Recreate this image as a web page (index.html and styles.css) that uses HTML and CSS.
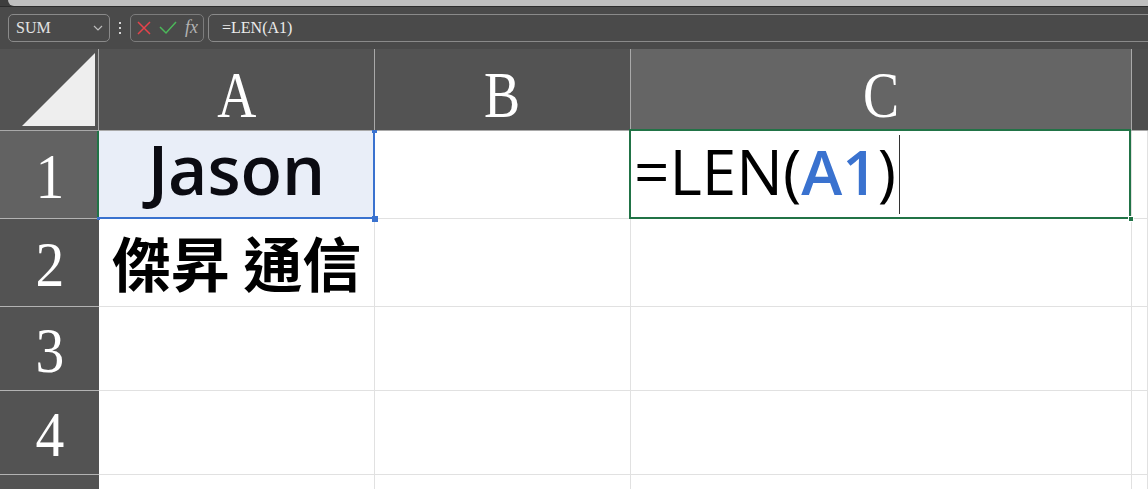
FILE: index.html
```html
<!DOCTYPE html>
<html lang="zh-Hant">
<head>
<meta charset="utf-8">
<title>LEN</title>
<link rel="stylesheet" href="styles.css">
</head>
<body>
<div class="app">
  <div class="top">
    <div class="strip"><div class="strip-in"></div></div>
    <div class="fbar">
      <div class="namebox">
        <span class="nb-text">SUM</span>
        <svg class="chev" width="10" height="6" viewBox="0 0 10 6"><polyline points="1,1 5,5 9,1" fill="none" stroke="#bdbdbd" stroke-width="1.2"/></svg>
      </div>
      <div class="dots"><i></i><i></i><i></i></div>
      <div class="btns">
        <svg class="ico" width="16" height="16" viewBox="0 0 16 16"><path d="M2 2 L14 14 M14 2 L2 14" stroke="#e5434b" stroke-width="1.5" fill="none"/></svg>
        <svg class="ico chk" width="18" height="14" viewBox="0 0 18 14"><polyline points="1,6 7,12 17,1" stroke="#4cb85a" stroke-width="1.5" fill="none"/></svg>
        <span class="fx">fx</span>
      </div>
      <div class="finput">=LEN(A1)</div>
    </div>
  </div>

  <div class="sheet">
    <div class="ch corner"><svg width="98" height="81" viewBox="0 0 98 81"><polygon points="22,77 95,77 95,4" fill="#eeeeee"/></svg></div>
    <div class="ch"><span class="hl">A</span></div>
    <div class="ch"><span class="hl">B</span></div>
    <div class="ch sel"><span class="hl">C</span></div>
    <div class="ch stub"></div>

    <div class="rh sel"><span class="hn">1</span></div>
    <div class="c ref"><span class="jason">Jason</span><i class="h h-tr"></i><i class="h h-br"></i><i class="h h-bl"></i></div>
    <div class="c"></div>
    <div class="c active"><span class="formula">=LEN(<b class="ref-b">A1</b>)</span><span class="caret"></span><i class="gh"></i></div>
    <div class="c"></div>

    <div class="rh"><span class="hn">2</span></div>
    <div class="c"><span class="cjk">傑昇 通信</span></div>
    <div class="c"></div>
    <div class="c"></div>
    <div class="c"></div>

    <div class="rh"><span class="hn">3</span></div>
    <div class="c"></div>
    <div class="c"></div>
    <div class="c"></div>
    <div class="c"></div>

    <div class="rh"><span class="hn">4</span></div>
    <div class="c"></div>
    <div class="c"></div>
    <div class="c"></div>
    <div class="c"></div>

    <div class="rh last"></div>
    <div class="c last"></div>
    <div class="c last"></div>
    <div class="c last"></div>
    <div class="c last"></div>
  </div>
</div>
</body>
</html>
```

FILE: styles.css
```css
* { box-sizing: border-box; }
html, body { margin: 0; padding: 0; }
body {
  width: 1148px;
  height: 489px;
  overflow: hidden;
  background: #4a4a4a;
  font-family: "Liberation Serif", serif;
}
.app { display: flex; flex-direction: column; height: 489px; }

/* top bar */
.top { height: 49px; background: #4a4a4a; display: flex; flex-direction: column; }
.strip { height: 7px; padding-left: 8px; background: #3e3e3e; border-bottom: 1px solid #2c2c2c; }
.strip-in { height: 6px; background: #bfbfbf; border-bottom-left-radius: 6px; }
.fbar { display: flex; align-items: stretch; height: 28px; margin-top: 7px; padding-left: 8px; margin-right: -12px; }
.namebox {
  width: 102px;
  border: 1px solid #8a8a8a;
  border-radius: 5px;
  display: flex; align-items: center; justify-content: space-between;
  padding: 0 6px 0 7px;
}
.nb-text { font-size: 16px; color: #e2e2e2; font-family: "Liberation Serif", serif; }
.chev { display: block; }
.dots { width: 20px; display: flex; flex-direction: column; align-items: center; justify-content: center; gap: 3px; }
.dots i { display: block; width: 2px; height: 2px; background: #d6d6d6; }
.btns {
  width: 74px;
  border: 1px solid #7c7c7c;
  border-radius: 5px;
  display: flex; align-items: center;
  padding-left: 5px; gap: 4px;
}
.ico { display: block; }
.ico.chk { margin-left: 3px; }
.fx { font-style: italic; font-size: 18px; color: #b3b3b3; font-family: "Liberation Serif", serif; margin-left: 4px; margin-top: -2px; }
.finput {
  flex: 1;
  margin-left: 4px;
  border: 1px solid #8a8a8a;
  border-radius: 5px;
  font-size: 16px; color: #ececec;
  display: flex; align-items: center;
  padding-left: 13px;
}

/* sheet */
.sheet {
  flex: 1;
  display: grid;
  grid-template-columns: 99px 276px 256px 501px 1fr;
  grid-template-rows: 82px 88px 88px 84px 84px 1fr;
  background: #fff;
}
.ch {
  background: #535353;
  border-right: 1px solid #a9a9a9;
  border-bottom: 1px solid #a9a9a9;
  display: flex; align-items: center; justify-content: center;
  padding-top: 11px;
  color: #fff;
}
.ch.corner { padding: 0; align-items: flex-start; justify-content: flex-start; }
.ch.corner svg { display: block; }
.ch.sel { background: #656565; }
.ch.stub { background: #4d4d4d; border-right: none; }
.hl { display: inline-block; font-size: 66px; line-height: 1; transform: scaleX(0.82); font-family: "Liberation Serif", serif; }

.rh {
  background: #535353;
  border-bottom: 1px solid #b3b3b3;
  display: flex; align-items: center; justify-content: center;
  color: #fff;
  padding-top: 5px;
}
.rh.sel { background: #626262; border-right: 2px solid #217346; padding-left: 2px; }
.rh.last { border-bottom: none; }
.hn { display: inline-block; font-size: 64px; line-height: 1; transform: scaleX(0.9); font-family: "Liberation Serif", serif; }

.c {
  background: #fff;
  border-right: 1px solid #e1e1e1;
  border-bottom: 1px solid #e1e1e1;
  display: flex; align-items: center; justify-content: center;
}
.c.last { border-bottom: none; }

.c.ref { background: #e9eef8; position: relative; padding-bottom: 12px; }
.c.ref::after {
  content: "";
  position: absolute;
  left: -1px; top: -1px; right: -1px; bottom: -1px;
  border-right: 2px solid #3a72cf;
  border-bottom: 2px solid #3a72cf;
  pointer-events: none;
}
.h { position: absolute; display: block; background: #3a72cf; z-index: 2; }
.h-tr { width: 5px; height: 3px; right: -3px; top: -1px; }
.h-br { width: 6px; height: 6px; right: -4px; bottom: -4px; }
.h-bl { width: 3px; height: 3px; left: -2px; bottom: -2px; }

.jason {
  font-family: "Open Sans", sans-serif;
  font-weight: 600;
  font-size: 68px;
  line-height: 1;
  color: #0b0b12;
}
.cjk {
  font-family: "Noto Sans CJK TC", sans-serif;
  font-weight: 700;
  font-size: 59px;
  line-height: 1;
  color: #000;
  padding-bottom: 2px;
}

.c.active { position: relative; justify-content: flex-start; padding-left: 3px; }
.c.active::after {
  content: "";
  position: absolute;
  left: -2px; top: -2px; right: 0; bottom: -1px;
  border: 2px solid #217346;
  pointer-events: none;
}
.gh { position: absolute; display: block; width: 6px; height: 6px; right: -3px; bottom: -4px; background: #217346; border: 1px solid #fff; z-index: 2; }
.formula {
  font-family: "Open Sans", sans-serif;
  font-weight: 400;
  font-size: 62px;
  line-height: 1;
  color: #000;
  padding-bottom: 7px;
}
.ref-b { font-weight: 600; color: #3a72cf; }
.caret { display: block; width: 1px; height: 79px; background: #333; margin-left: 3px; }
```
